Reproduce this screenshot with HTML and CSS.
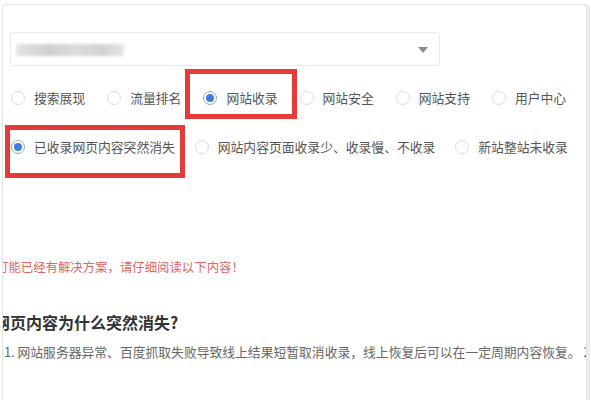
FILE: index.html
```html
<!DOCTYPE html>
<html lang="zh-CN">
<head>
  <meta charset="UTF-8">
  <meta name="viewport" content="width=device-width, initial-scale=1.0">
  <title>反馈中心</title>
  <link rel="stylesheet" href="styles.css">
</head>
<body>
  <div class="card">
    <div class="select">
      <span class="select-value"></span>
      <span class="select-arrow"></span>
    </div>

    <div class="radio-row">
      <label class="radio"><span class="dot"></span>搜索展现</label>
      <label class="radio"><span class="dot"></span>流量排名</label>
      <label class="radio checked"><span class="dot"></span>网站收录</label>
      <label class="radio"><span class="dot"></span>网站安全</label>
      <label class="radio"><span class="dot"></span>网站支持</label>
      <label class="radio"><span class="dot"></span>用户中心</label>
    </div>

    <div class="radio-row radio-row-sub">
      <label class="radio checked"><span class="dot"></span>已收录网页内容突然消失</label>
      <label class="radio"><span class="dot"></span>网站内容页面收录少、收录慢、不收录</label>
      <label class="radio"><span class="dot"></span>新站整站未收录</label>
    </div>

    <p class="notice">可能已经有解决方案，请仔细阅读以下内容！</p>
    <h3 class="question">网页内容为什么突然消失?</h3>
    <p class="answer">1. 网站服务器异常、百度抓取失败导致线上结果短暂取消收录，线上恢复后可以在一定周期内容恢复。 2</p>
  </div>

  <div class="mark mark-top"></div>
  <div class="mark mark-sub"></div>
</body>
</html>
```

FILE: styles.css
```css
body {
  font-family: "Noto Sans CJK SC", "Noto Sans", sans-serif;
  margin: 0;
  padding: 0;
  background: #fff;
  overflow: hidden;
  height: 400px;
}

.card {
  margin: 4px 4px 0 2px;
  height: 396px;
  padding: 27px 7px 0 7px;
  border: 1px solid #e3e3e3;
  border-bottom: none;
  border-radius: 5px 5px 0 0;
  box-shadow: 3px 0 0 #ececec;
  overflow: hidden;
  box-sizing: border-box;
}

.select {
  width: 430px;
  height: 34px;
  border: 1px solid #eaeaea;
  border-radius: 3px;
  box-sizing: border-box;
  display: flex;
  align-items: center;
  justify-content: space-between;
  padding: 0 11px 0 5px;
}

.select-value {
  width: 108px;
  height: 12px;
  margin-top: 2px;
  background: linear-gradient(90deg, #e4e4e4 0%, #cfcfcf 30%, #dcdcdc 55%, #d2d2d2 80%, #e6e6e6 100%);
  filter: blur(1.5px);
}

.select-arrow {
  width: 0;
  height: 0;
  border-left: 5px solid transparent;
  border-right: 5px solid transparent;
  border-top: 6px solid #8a8a8a;
  margin-top: 2px;
}

.radio-row {
  display: flex;
  gap: 21px;
  margin-top: 22px;
  line-height: 20px;
  font-size: 12.8px;
  color: #555;
  white-space: nowrap;
}

.radio-row-sub {
  gap: 19px;
  margin-top: 29px;
}

.radio {
  display: flex;
  align-items: center;
  gap: 9px;
}

.dot {
  width: 14px;
  height: 14px;
  border: 1px solid #dcdcdc;
  border-radius: 50%;
  box-sizing: border-box;
  display: flex;
  align-items: center;
  justify-content: center;
  margin-left: 1px;
}

.radio.checked .dot {
  border-color: #9aa6b8;
}

.radio.checked .dot::after {
  content: '';
  width: 8px;
  height: 8px;
  border-radius: 50%;
  background: #3d7fe0;
}

.notice {
  margin: 101px 0 0 -14px;
  font-size: 12.4px;
  line-height: 18px;
  color: #df6560;
  white-space: nowrap;
}

.question {
  margin: 35px 0 0 -16px;
  font-size: 16px;
  line-height: 22px;
  font-weight: 700;
  color: #333;
  white-space: nowrap;
}

.answer {
  margin: 9px 0 0 -6px;
  font-size: 12.8px;
  line-height: 20px;
  color: #666;
  white-space: nowrap;
}

.mark {
  position: absolute;
  border: 5px solid #e53a37;
  box-sizing: border-box;
}

.mark-top {
  left: 185px;
  top: 69px;
  width: 112px;
  height: 50px;
}

.mark-sub {
  left: 5px;
  top: 125px;
  width: 180px;
  height: 53px;
}
```
